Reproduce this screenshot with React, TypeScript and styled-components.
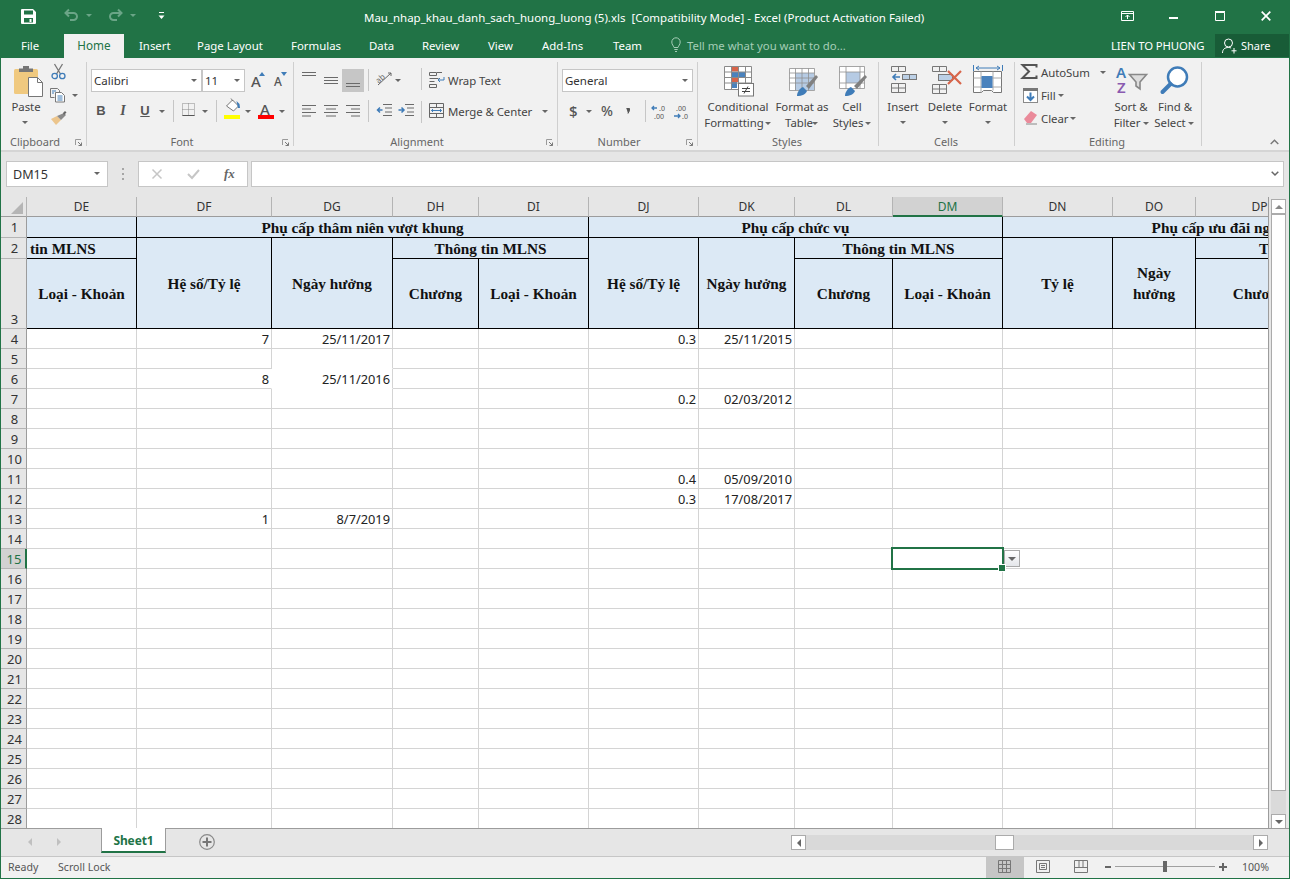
import React from "react";
import styled, { createGlobalStyle, css } from "styled-components";

const UI = `"Noto Sans", "Open Sans", sans-serif`;
const GREEN = "#217346";
const ICON = "#6a6a6a";
const BLUE = "#3f7cb8";

const Global = createGlobalStyle`
  html, body { margin: 0; padding: 0; width: 1290px; height: 879px; overflow: hidden; background: #e6e6e6; }
  #root { width: 1290px; height: 879px; }
  * { box-sizing: border-box; }
`;

const Win = styled.div`
  position: relative; width: 1290px; height: 879px; overflow: hidden;
  background: #e6e6e6; font-family: ${UI}; border: 1px solid ${GREEN}; border-top: 0;
`;
const Layer = styled.div`position: absolute; left: -1px; top: 0; width: 1290px; height: 879px;`;

/* ---------- title bar ---------- */
const TitleBar = styled.div`position: absolute; left: 0; top: 0; width: 1290px; height: 58px; background: ${GREEN};`;
const TitleText = styled.div`
  position: absolute; left: 364px; top: 9px; width: 570px; height: 18px; line-height: 18px;
  font-size: 11.48px; color: #fff; white-space: pre;
`;
const Tab = styled.div<{ $x: number; $active?: boolean }>`
  position: absolute; left: ${p => p.$x}px; top: 37px; height: 18px; line-height: 17px;
  font-size: 11.4px; color: #fff; white-space: nowrap;
`;
const HomeTab = styled.div`
  position: absolute; left: 64px; top: 34px; width: 60px; height: 24px; background: #f1f1f1;
  color: ${GREEN}; font-size: 11.7px; text-align: center; line-height: 23px;
`;
const TellMe = styled.div`
  position: absolute; left: 687px; top: 37px; height: 18px; line-height: 17px; font-size: 11.35px; color: #a5cdb6; white-space: nowrap;
`;
const UserName = styled.div`
  position: absolute; left: 1111px; top: 37px; height: 18px; line-height: 17px; font-size: 11.35px; color: #fff; white-space: nowrap; letter-spacing: -0.1px;
`;
const ShareBox = styled.div`
  position: absolute; left: 1215px; top: 34px; width: 74px; height: 23px; background: #185c37;
  color: #fff; font-size: 11px; line-height: 23px; padding-left: 26px;
`;

/* ---------- generic drawing holder ---------- */
const IconBox = styled.svg<{ $x: number; $y: number }>`
  position: absolute; left: ${p => p.$x}px; top: ${p => p.$y}px; display: block; overflow: visible;
`;
const Ico: React.FC<{ x: number; y: number; w: number; h: number; children: React.ReactNode }> = ({ x, y, w, h, children }) => (
  <IconBox $x={x} $y={y} width={w} height={h} viewBox={`0 0 ${w} ${h}`} fill="none">{children}</IconBox>
);

/* ---------- ribbon ---------- */
const Ribbon = styled.div`position: absolute; left: 0; top: 58px; width: 1290px; height: 92px; background: #f1f1f1; border-left: 1px solid ${GREEN}; border-right: 1px solid ${GREEN};`;
const RibbonEdge = styled.div`position: absolute; left: 1px; top: 150px; width: 1288px; height: 2px; background: #d5d5d5;`;
const Items = styled.div`position: absolute; left: 0; top: 0; width: 1290px; height: 152px;`;
const GroupDivider = styled.div<{ $x: number }>`
  position: absolute; left: ${p => p.$x}px; top: 62px; width: 1px; height: 84px; background: #cfcfcf;
`;
const MiniDivider = styled.div<{ $x: number; $y: number }>`
  position: absolute; left: ${p => p.$x}px; top: ${p => p.$y}px; width: 1px; height: 22px; background: #c6c6c6;
`;
const GroupLabel = styled.div<{ $cx: number }>`
  position: absolute; left: ${p => p.$cx}px; top: 134px; transform: translateX(-50%);
  height: 16px; line-height: 16px; font-size: 11px; color: #666; white-space: nowrap;
`;
const Label = styled.div<{ $x: number; $y: number; $center?: boolean }>`
  position: absolute; left: ${p => p.$x}px; top: ${p => p.$y - 8}px; height: 16px; line-height: 16px;
  font-size: 11.4px; color: #444; white-space: nowrap; letter-spacing: -0.05px;
  ${p => p.$center && css`transform: translateX(-50%);`}
`;
const Caret = styled.i<{ $x: number; $y: number; $tint?: string }>`
  position: absolute; left: ${p => p.$x - 3}px; top: ${p => p.$y - 1}px; width: 0; height: 0;
  border-left: 3px solid transparent; border-right: 3px solid transparent; border-top: 3px solid ${p => p.$tint ?? "#666"};
`;
const ComboBox = styled.div<{ $x: number; $w: number }>`
  position: absolute; left: ${p => p.$x}px; top: 69px; width: ${p => p.$w}px; height: 23px; background: #fff;
  border: 1px solid #c6c6c6; font-size: 11.5px; line-height: 21px; padding-left: 2px; color: #333;
`;
const PressedCell = styled.div`position: absolute; left: 342px; top: 69px; width: 22px; height: 23px; background: #c6c6c6;`;
const FontButton = styled.div<{ $x: number; $italic?: boolean; $under?: boolean }>`
  position: absolute; left: ${p => p.$x}px; top: 102px; width: 14px; height: 18px; line-height: 18px; text-align: center;
  font-family: "Liberation Sans", sans-serif; font-size: 13px; font-weight: 700; color: #555;
  ${p => p.$italic && css`font-family: "Liberation Serif", serif; font-style: italic; font-size: 14px;`}
  ${p => p.$under && css`text-decoration: underline;`}
`;
const BigLetter = styled.div<{ $x: number; $y: number; $s: number }>`
  position: absolute; left: ${p => p.$x}px; top: ${p => p.$y}px; font-family: ${UI}; font-size: ${p => p.$s}px; line-height: 16px; color: #555; font-weight: 500;
`;
const Swatch = styled.div<{ $x: number; $c: string }>`
  position: absolute; left: ${p => p.$x}px; top: 115px; width: 16px; height: 4px; background: ${p => p.$c};
`;
const Launcher: React.FC<{ x: number }> = ({ x }) => (
  <Ico x={x} y={139} w={7} h={7}>
    <path d="M0.5 6V0.5H6" stroke="#9a9a9a" />
    <path d="M3 3L6.5 6.5M6.5 3.5V6.5H3.5" stroke="#7a7a7a" />
  </Ico>
);

/* ---------- formula bar ---------- */
const FormulaBox = styled.div<{ $x: number; $w: number }>`
  position: absolute; left: ${p => p.$x}px; top: 161px; width: ${p => p.$w}px; height: 26px; background: #fff; border: 1px solid #c6c6c6;
`;
const NameText = styled.div`
  position: absolute; left: 13px; top: 166px; height: 18px; line-height: 18px; font-size: 12.6px; color: #333;
`;
const FxText = styled.div`
  position: absolute; left: 224px; top: 165px; height: 18px; line-height: 18px; font-family: "Liberation Serif", serif; font-style: italic; font-size: 13px; font-weight: 700; color: #666;
`;

/* ---------- sheet ---------- */
const COLS = ["DE", "DF", "DG", "DH", "DI", "DJ", "DK", "DL", "DM", "DN", "DO", "DP", "DQ"];
const WIDTHS = [110, 135, 121, 86, 110, 110, 96, 98, 110, 110, 83, 128, 111];

const Sheet = styled.div`
  position: absolute; left: 1px; top: 197px; width: 1268px; height: 632px; overflow: hidden;
  border-right: 1px solid #9c9c9c; background: #fff;
  display: grid;
  grid-template-columns: 26px ${WIDTHS.map(w => w + "px").join(" ")};
  grid-template-rows: 20px 21px 21px 70px repeat(25, 20px);
`;
const Corner = styled.div`
  background: #e6e6e6; border-right: 1px solid #b4b4b4; border-bottom: 1px solid #9c9c9c; position: relative;
  &::after { content: ""; position: absolute; right: 3px; bottom: 2px; width: 0; height: 0;
    border-left: 12px solid transparent; border-bottom: 12px solid #b5b5b5; }
`;
const ColHead = styled.div<{ $on?: boolean }>`
  background: ${p => p.$on ? "#d2d2d2" : "#e6e6e6"}; border-right: 1px solid #b4b4b4;
  border-bottom: ${p => p.$on ? `2px solid ${GREEN}` : "1px solid #9c9c9c"};
  color: ${p => p.$on ? GREEN : "#333"}; font-size: 12px; line-height: 20px; text-align: center; white-space: nowrap;
`;
const RowHead = styled.div<{ $on?: boolean; $low?: boolean }>`
  background: ${p => p.$on ? "#d2d2d2" : "#e6e6e6"}; border-bottom: 1px solid #b4b4b4;
  border-right: ${p => p.$on ? `2px solid ${GREEN}` : "1px solid #9c9c9c"};
  color: ${p => p.$on ? GREEN : "#333"}; font-size: 13px; line-height: 18px; text-align: center;
  display: flex; align-items: ${p => p.$low ? "flex-end" : "center"}; justify-content: center;
  padding-left: 2px;
`;
const Band = styled.div<{ $col: number; $span?: number; $row: number; $rows?: number; $left?: boolean }>`
  grid-column: ${p => p.$col + 2} / span ${p => p.$span ?? 1};
  grid-row: ${p => p.$row + 1} / span ${p => p.$rows ?? 1};
  background: #dce9f5; border-right: 1px solid #000; border-bottom: 1px solid #000;
  font-family: "Liberation Serif", "Times New Roman", serif; font-weight: 700; font-size: 15.27px; line-height: 21px; color: #111;
  display: flex; align-items: center; justify-content: ${p => p.$left ? "flex-start" : "center"};
  text-align: center; white-space: pre-line; overflow: hidden;
  padding-top: ${p => p.$row === 1 ? "1px" : "0"};
  padding-left: ${p => p.$left ? "3px" : "0"};
`;
const Cell = styled.div<{ $noR?: boolean; $noB?: boolean }>`
  position: relative;
  border-right: ${p => p.$noR ? "1px solid transparent" : "1px solid #d4d4d4"};
  border-bottom: ${p => p.$noB ? "1px solid transparent" : "1px solid #d4d4d4"};
  font-size: 12.8px; line-height: 20px; text-align: right; padding-right: 2px; color: #222; white-space: nowrap;
`;
const Selection = styled.div`
  position: absolute; left: -2px; top: -2px; width: 113px; height: 23px; border: 2px solid ${GREEN}; z-index: 3;
  &::after { content: ""; position: absolute; right: -4px; bottom: -4px; width: 6px; height: 6px; background: ${GREEN}; border: 1px solid #fff; }
`;
const ValidationButton = styled.div`
  position: absolute; left: 111px; top: 1px; width: 16px; height: 17px; z-index: 2; border: 1px solid #a9a9a9;
  background: linear-gradient(#fff, #e4e6ea);
  &::after { content: ""; position: absolute; left: 3px; top: 6px; border-left: 4px solid transparent; border-right: 4px solid transparent; border-top: 4px solid #666; }
`;

/* ---------- scroll bars, tabs, status ---------- */
const VTrack = styled.div`position: absolute; left: 1271px; top: 199px; width: 15px; height: 630px; background: #dadada;`;
const ScrollButton = styled.div<{ $x: number; $y: number; $w?: number; $h?: number }>`
  position: absolute; left: ${p => p.$x}px; top: ${p => p.$y}px; width: ${p => p.$w ?? 15}px; height: ${p => p.$h ?? 15}px;
  background: #fff; border: 1px solid #ababab; display: flex; align-items: center; justify-content: center;
`;
const ArrowUp = styled.i<{ $down?: boolean }>`
  display: block; width: 0; height: 0; border-left: 4px solid transparent; border-right: 4px solid transparent;
  ${p => p.$down ? css`border-top: 4px solid #666;` : css`border-bottom: 4px solid #888;`}
`;
const ArrowSide = styled.i<{ $left?: boolean; $c?: string }>`
  display: block; width: 0; height: 0; border-top: 4px solid transparent; border-bottom: 4px solid transparent;
  ${p => p.$left ? css`border-right: 4px solid ${p.$c ?? "#666"};` : css`border-left: 4px solid ${p.$c ?? "#666"};`}
`;
const VThumb = styled.div`position: absolute; left: 1271px; top: 214px; width: 15px; height: 577px; background: #fff; border: 1px solid #ababab;`;
const TabStrip = styled.div`position: absolute; left: 1px; top: 828px; width: 1288px; height: 28px; background: #e6e6e6; border-top: 1px solid #9c9c9c;`;
const SheetTab = styled.div`
  position: absolute; left: 101px; top: 828px; width: 65px; height: 25px; background: #fff;
  border-left: 1px solid #9c9c9c; border-right: 1px solid #9c9c9c; border-bottom: 2px solid ${GREEN};
  color: ${GREEN}; font-size: 12px; font-weight: 700; text-align: center; line-height: 26px; letter-spacing: -0.1px;
`;
const NavArrow = styled.div<{ $x: number }>`position: absolute; left: ${p => p.$x}px; top: 838px;`;
const HTrack = styled.div`position: absolute; left: 791px; top: 835px; width: 477px; height: 15px; background: #d9d9d9;`;
const StatusBar = styled.div`
  position: absolute; left: 1px; top: 856px; width: 1288px; height: 22px; background: #f1f1f1; border-top: 1px solid #c6c6c6;
`;
const StatusText = styled.div<{ $x: number }>`
  position: absolute; left: ${p => p.$x}px; top: 859px; height: 16px; line-height: 16px; font-size: 10.6px; color: #555; white-space: nowrap;
`;
const ViewActive = styled.div`position: absolute; left: 986px; top: 857px; width: 38px; height: 21px; background: #c6c6c6;`;
const ZoomRail = styled.div`position: absolute; left: 1115px; top: 866px; width: 100px; height: 1px; background: #a0a0a0;`;
const ZoomKnob = styled.div`position: absolute; left: 1163px; top: 861px; width: 4px; height: 11px; background: #666;`;
const ZoomSign = styled.div<{ $x: number; $w: number }>`position: absolute; left: ${p => p.$x}px; top: 866px; width: ${p => p.$w}px; height: 2px; background: #666;`;
const ZoomPlusBar = styled.div`position: absolute; left: 1222px; top: 863px; width: 2px; height: 8px; background: #666;`;

/* ---------- icons ---------- */
const HLines: React.FC<{ x: number; y: number; rows: [number, number][]; gap: number; c?: string }> = ({ x, y, rows, gap, c = ICON }) => (
  <Ico x={x} y={y} w={16} h={rows.length * gap + 1}>
    {rows.map(([a, b], i) => <line key={i} x1={a} x2={b} y1={i * gap + 0.5} y2={i * gap + 0.5} stroke={c} />)}
  </Ico>
);

const values: Record<string, string> = {
  DF4: "7", DG4: "25/11/2017", DJ4: "0.3", DK4: "25/11/2015",
  DF6: "8", DG6: "25/11/2016",
  DJ7: "0.2", DK7: "02/03/2012",
  DJ11: "0.4", DK11: "05/09/2010",
  DJ12: "0.3", DK12: "17/08/2017",
  DF13: "1", DG13: "8/7/2019",
};
const rowNumbers = Array.from({ length: 25 }, (_, i) => i + 4);

export default function App() {
  return (
    <Win>
      <Global />
      <Layer>
        <TitleBar />
        {/* quick access */}
        <Ico x={21} y={9} w={15} h={15}>
          <path fillRule="evenodd" d="M0 1a1 1 0 0 1 1-1h11l3 3v11a1 1 0 0 1-1 1H1a1 1 0 0 1-1-1zM3 1.500v4h9v-4zM3 9v4.500h9V9z" fill="#fff" />
          <rect x="8.500" y="10" width="2" height="3" fill="#fff" />
        </Ico>
        <Ico x={64} y={8} w={15} h={14}>
          <path d="M5 1.500L1.500 5L5 8.500M1.500 5H9.500a3.500 3.500 0 0 1 0 7H6" stroke="#6ba587" strokeWidth="2" />
        </Ico>
        <Caret $x={89} $y={15} $tint="#6ba587" />
        <Ico x={108} y={8} w={15} h={14}>
          <path d="M10 1.500L13.500 5L10 8.500M13.500 5H5.500a3.500 3.500 0 0 0 0 7H9" stroke="#6ba587" strokeWidth="2" />
        </Ico>
        <Caret $x={133} $y={15} $tint="#6ba587" />
        <Ico x={158} y={12} w={7} h={8}>
          <path d="M1 .5h5" stroke="#fff" /><path d="M.5 3.500h6L3.500 7z" fill="#fff" />
        </Ico>
        <TitleText>{"Mau_nhap_khau_danh_sach_huong_luong (5).xls  [Compatibility Mode] - Excel (Product Activation Failed)"}</TitleText>
        {/* window controls */}
        <Ico x={1121} y={11} w={13} h={10}>
          <path d="M.5.5h12v9H.5zM.5 2.500h12" stroke="#fff" /><path d="M6.500 8V4M4.500 6l2-2 2 2" stroke="#fff" />
        </Ico>
        <Ico x={1169} y={17} w={9} h={2}><rect width="9" height="2" fill="#fff" /></Ico>
        <Ico x={1215} y={11} w={10} h={10}><path d="M.5 1.500h9v8h-9z" stroke="#fff" /><path d="M0 .8h10" stroke="#fff" strokeWidth="1.600" /></Ico>
        <Ico x={1261} y={11} w={10} h={10}><path d="M.7.7l8.600 8.600M9.300.7L.7 9.300" stroke="#fff" strokeWidth="1.700" /></Ico>
        {/* tabs */}
        <Tab $x={21}>File</Tab>
        <HomeTab>Home</HomeTab>
        <Tab $x={139}>Insert</Tab>
        <Tab $x={197}>Page Layout</Tab>
        <Tab $x={291}>Formulas</Tab>
        <Tab $x={369}>Data</Tab>
        <Tab $x={422}>Review</Tab>
        <Tab $x={488}>View</Tab>
        <Tab $x={542}>Add-Ins</Tab>
        <Tab $x={613}>Team</Tab>
        <Ico x={671} y={37} w={10} h={16}>
          <path d="M3 10.500C2.500 8.500.8 7.800.8 5A4.200 4.200 0 0 1 9.200 5c0 2.800-1.700 3.500-2.200 5.500zM3.300 12.500h3.400M4 14.500h2" stroke="#a5cdb6" />
        </Ico>
        <TellMe>Tell me what you want to do...</TellMe>
        <UserName>LIEN TO PHUONG</UserName>
        <ShareBox>Share</ShareBox>
        <Ico x={1222} y={38} w={16} h={16}>
          <circle cx="6.500" cy="5" r="4" stroke="#fff" /><path d="M.5 15c0-3.500 2-5.500 6-5.500 1 0 2 .2 2.600.5M12 10v5.500M9.500 12.800h5" stroke="#fff" />
        </Ico>

        <Ribbon />
        <RibbonEdge />
        <Items>
          {[86, 293, 557, 697, 878, 1014, 1201].map(x => <GroupDivider key={x} $x={x} />)}

          {/* Clipboard */}
          <Ico x={13} y={65} w={30} h={32}>
            <rect x="1" y="4" width="24" height="25" rx="1.500" fill="#f0c97f" />
            <path d="M6 4V3.500h4V1h6v2.500h4V7H6z" fill="#767676" />
            <path d="M15.500 12.500h9l5 5v14h-14z" fill="#fff" stroke="#767676" />
            <path d="M24.500 12.500v5h5" stroke="#767676" />
          </Ico>
          <Ico x={51} y={63} w={15} h={17}>
            <path d="M3.500 1l6 10M11.500 1l-6 10" stroke="#777" strokeWidth="1.300" />
            <circle cx="3.700" cy="13" r="2.700" stroke={BLUE} strokeWidth="1.300" />
            <circle cx="11.300" cy="13" r="2.700" stroke={BLUE} strokeWidth="1.300" />
          </Ico>
          <Ico x={50} y={88} w={16} h={15}>
            <path d="M.5.5h7l2 2v2M.5.5v9h4" stroke="#777" />
            <path d="M5.500 4.500h6l3 3v6.500h-9z" fill="#fff" stroke="#777" />
            <path d="M7.500 8h5M7.500 10h5M7.500 12h5M2 3h4M2 5h2" stroke={BLUE} />
          </Ico>
          <Caret $x={75} $y={95} />
          <Ico x={50} y={110} w={17} h={16}>
            <path d="M1 9l5 6 5-5-4-4z" fill="#ecc58c" />
            <path d="M7 6l4 4 5-5-2-2z" fill="#8a8a8a" />
            <path d="M13 3l2-2 1.500 1.500L14 5z" fill="#666" />
          </Ico>
          <Label $x={26} $y={107} $center>Paste</Label>
          <Caret $x={25} $y={122} />
          <GroupLabel $cx={35}>Clipboard</GroupLabel>
          <Launcher x={75} />

          {/* Font */}
          <ComboBox $x={91} $w={111}>Calibri</ComboBox>
          <Caret $x={194} $y={80} />
          <ComboBox $x={202} $w={43}>11</ComboBox>
          <Caret $x={237} $y={80} />
          <BigLetter $x={251} $y={73} $s={15}>A</BigLetter>
          <Ico x={259} y={72} w={6} h={4}><path d="M0 4l3-4 3 4z" fill={BLUE} /></Ico>
          <BigLetter $x={274} $y={74} $s={12}>A</BigLetter>
          <Ico x={281} y={72} w={6} h={4}><path d="M0 0l3 4 3-4z" fill={BLUE} /></Ico>
          <FontButton $x={94}>B</FontButton>
          <FontButton $x={116} $italic>I</FontButton>
          <FontButton $x={138} $under>U</FontButton>
          <Caret $x={162} $y={111} />
          <MiniDivider $x={173} $y={100} />
          <Ico x={182} y={103} w={13} h={13}>
            <path d="M.5.5h12v12H.5zM.5 6.500h12M6.500.5v12" stroke="#888" strokeDasharray="1 1" />
            <path d="M.5 12.500h12" stroke="#555" />
          </Ico>
          <Caret $x={205} $y={111} />
          <MiniDivider $x={216} $y={100} />
          <Ico x={225} y={97} w={16} h={17}>
            <path d="M1.500 9L7.500 3l6 6-5 5z" fill="#fff" stroke="#777" />
            <path d="M6 1.500L8 4" stroke="#777" />
            <path d="M11.500 4l3 3 .5 4h-2z" fill={BLUE} />
          </Ico>
          <Swatch $x={224} $c="#ffff00" />
          <Caret $x={248} $y={111} />
          <BigLetter $x={260} $y={101} $s={15}>A</BigLetter>
          <Swatch $x={258} $c="#ff0000" />
          <Caret $x={282} $y={111} />
          <GroupLabel $cx={182}>Font</GroupLabel>
          <Launcher x={282} />

          {/* Alignment */}
          <PressedCell />
          <HLines x={302} y={72} rows={[[0, 14], [0, 14]]} gap={3} />
          <HLines x={324} y={77} rows={[[0, 14], [0, 14], [0, 14]]} gap={3} />
          <HLines x={346} y={83} rows={[[0, 14], [0, 14]]} gap={3} />
          <MiniDivider $x={368} $y={69} />
          <Ico x={376} y={71} w={17} h={17}>
            <path d="M2 14L15 2M12 2h3v3" stroke="#666" />
            <text x="0" y="10" fontSize="8" fill="#666" transform="rotate(-42 5 8)" fontFamily="Noto Sans">ab</text>
          </Ico>
          <Caret $x={398} $y={80} />
          <HLines x={302} y={105} rows={[[0, 14], [0, 9], [0, 14], [0, 9]]} gap={3.5} />
          <HLines x={324} y={105} rows={[[0, 14], [2, 12], [0, 14], [2, 12]]} gap={3.5} />
          <HLines x={346} y={105} rows={[[0, 14], [5, 14], [0, 14], [5, 14]]} gap={3.5} />
          <MiniDivider $x={368} $y={100} />
          <Ico x={376} y={104} w={16} h={13}>
            <path d="M7 .5h9M9 4h7M9 8h7M7 11.500h9" stroke={ICON} />
            <path d="M6.500 6H1.500M4 3.500L1.500 6 4 8.500" stroke={BLUE} strokeWidth="1.500" />
          </Ico>
          <Ico x={398} y={104} w={16} h={13}>
            <path d="M7 .5h9M9 4h7M9 8h7M7 11.500h9" stroke={ICON} />
            <path d="M.5 6h5M3.500 3.500L6 6 3.500 8.500" stroke={BLUE} strokeWidth="1.500" />
          </Ico>
          <MiniDivider $x={421} $y={68} />
          <MiniDivider $x={421} $y={101} />
          <Ico x={429} y={72} w={16} h={16}>
            <path d="M.5.5h7v3h-7zM.5 6.500h9M.5 9.500h5M.5 12.500v3h7v-3z" stroke="#666" />
            <path d="M8 .5h5" stroke="#666" />
            <path d="M15 5v3h-6M11 6L9 8l2 2" stroke={BLUE} />
          </Ico>
          <Label $x={448} $y={81}>Wrap Text</Label>
          <Ico x={429} y={103} w={15} h={15}>
            <path d="M.5.5h14v14H.5zM.5 4.500h14M.5 10.500h14" stroke="#666" />
            <path d="M7.500.5v4M7.500 10.500v4" stroke="#666" />
            <path d="M2.500 7.500h10M4 6L2.500 7.500 4 9M11 6l1.500 1.500L11 9" stroke={BLUE} />
          </Ico>
          <Label $x={448} $y={112}>Merge &amp; Center</Label>
          <Caret $x={545} $y={111} />
          <GroupLabel $cx={417}>Alignment</GroupLabel>
          <Launcher x={546} />

          {/* Number */}
          <ComboBox $x={562} $w={131}>General</ComboBox>
          <Caret $x={685} $y={80} />
          <BigLetter $x={569} $y={103} $s={15}>$</BigLetter>
          <Caret $x={589} $y={111} />
          <BigLetter $x={601} $y={103} $s={14}>%</BigLetter>
          <Ico x={626} y={107} w={5} h={7}><path d="M.5 1.500h3v2l-1.500 3" fill="#555" stroke="#555" /></Ico>
          <MiniDivider $x={645} $y={100} />
          <Ico x={651} y={104} w={18} h={15}>
            <path d="M6 4H1M3 2L1 4l2 2" stroke={BLUE} strokeWidth="1.300" />
            <text x="8" y="6.500" fontSize="7" fill="#555" fontFamily="Noto Sans">.0</text>
            <text x="3" y="14.500" fontSize="7" fill="#555" fontFamily="Noto Sans">.00</text>
          </Ico>
          <Ico x={673} y={104} w={18} h={15}>
            <text x="3" y="6.500" fontSize="7" fill="#555" fontFamily="Noto Sans">.00</text>
            <path d="M1 12h6M5 10l2 2-2 2" stroke={BLUE} strokeWidth="1.300" />
            <text x="9" y="14.500" fontSize="7" fill="#555" fontFamily="Noto Sans">.0</text>
          </Ico>
          <GroupLabel $cx={619}>Number</GroupLabel>
          <Launcher x={686} />

          {/* Styles */}
          <Ico x={724} y={66} w={31} h={31}>
            <path d="M.5.5h27v23H.5z" fill="#fff" />
            <path d="M8 1h6v4.500H8zM8 11h7v5H8z" fill="#d8654a" />
            <path d="M8 6h14v5H8zM8 16h5v6H8z" fill="#4a82bd" />
            <path d="M.5.5h27v23H.5zM.5 6h27M.5 11.500h27M.5 17h27M7.500.5v23M14.500.5v23M21.500.5v23" stroke="#8a8a8a" />
            <rect x="14.500" y="17.500" width="15" height="12.500" fill="#fff" stroke="#777" />
            <path d="M18 22.500h8M18 25.500h8M24 20.500l-4 7" stroke="#444" />
          </Ico>
          <Label $x={738} $y={107} $center>Conditional</Label>
          <Label $x={734} $y={123} $center>Formatting</Label>
          <Caret $x={768} $y={123} />
          <Ico x={789} y={68} w={30} h={29}>
            <path d="M.5.5h25v22H.5z" fill="#fff" />
            <path d="M6 5h19v17H6z" fill="#b6cbe4" />
            <path d="M.5.5h25v22H.5zM.5 5h25M.5 10h25M.5 15h25M6.500.5v22M13 .5v22M19.500.5v22" stroke="#8f8f8f" strokeWidth=".8" />
            <path d="M8 28c0-4 3-8 6-9l4 4c-1 3-5 5-10 5z" fill={BLUE} />
            <path d="M17 18L27 7l2 2-9 12z" fill="#808080" />
          </Ico>
          <Label $x={802} $y={107} $center>Format as</Label>
          <Label $x={799} $y={123} $center>Table</Label>
          <Caret $x={815} $y={123} />
          <Ico x={839} y={66} w={30} h={31}>
            <path d="M.5.5h25v22H.5z" fill="#fff" />
            <path d="M7 6h14v11H7z" fill="#b6cbe4" />
            <path d="M.5.5h25v22H.5zM.5 6h25M.5 17h25M7 .5v22M21 .5v22" stroke="#8f8f8f" strokeWidth=".8" />
            <path d="M6 30c0-4 3-8 6-9l4 4c-1 3-5 5-10 5z" fill={BLUE} />
            <path d="M15 20L26 9l2 2-10 12z" fill="#808080" />
          </Ico>
          <Label $x={852} $y={107} $center>Cell</Label>
          <Label $x={848} $y={123} $center>Styles</Label>
          <Caret $x={868} $y={123} />
          <GroupLabel $cx={787}>Styles</GroupLabel>

          {/* Cells */}
          <Ico x={891} y={66} w={26} h={27}>
            <path d="M.5.5h14v5H.5zM7.500.5v5M.5 17.500h14v9H.5zM.5 22h14M7.500 17.500v9" stroke="#777" />
            <rect x="11.500" y="8.500" width="14" height="5" fill="#bcd0e6" stroke="#777" />
            <path d="M18.500 8.500v5" stroke="#777" />
            <path d="M9 11H2M5 8l-3 3 3 3" stroke={BLUE} strokeWidth="1.600" />
          </Ico>
          <Label $x={903} $y={107} $center>Insert</Label>
          <Caret $x={903} $y={122} />
          <Ico x={932} y={66} w={31} h={28}>
            <path d="M.5.5h14v5H.5zM7.500.5v5M.5 18.500h14v9H.5zM.5 23h14M7.500 18.500v9" stroke="#777" />
            <rect x="6.500" y="8.500" width="14" height="6" fill="#bcd0e6" stroke="#777" />
            <path d="M16 5l13 13M29 5L16 18" stroke="#d8654a" strokeWidth="2.200" />
          </Ico>
          <Label $x={945} $y={107} $center>Delete</Label>
          <Caret $x={945} $y={122} />
          <Ico x={973} y={64} w={30} h={31}>
            <path d="M.5 1v6M29.500 1v6M3 4h24M6 2L3 4l3 2M24 2l3 2-3 2" stroke={BLUE} />
            <path d="M.5 7.500h28v21h-8l-2-2h-8l-2 2h-8z" fill="#fff" stroke="#777" />
            <path d="M.5 14h28M.5 23h28M8 7.500v21M20 7.500v19" stroke="#aaa" />
            <rect x="8.500" y="12" width="11" height="12" fill="#4a82bd" />
          </Ico>
          <Label $x={988} $y={107} $center>Format</Label>
          <Caret $x={988} $y={122} />
          <GroupLabel $cx={946}>Cells</GroupLabel>

          {/* Editing */}
          <Ico x={1021} y={64} w={16} h={15}>
            <path d="M15.500 3.500V1H1.500l6.500 6.500L1.500 14h14v-2.500" stroke="#555" strokeWidth="2" />
          </Ico>
          <Label $x={1041} $y={73}>AutoSum</Label>
          <Caret $x={1103} $y={72} />
          <Ico x={1023} y={88} w={15} h={15}>
            <rect x=".5" y=".5" width="14" height="14" fill="#fff" stroke="#8a8a8a" />
            <rect x="0" y="0" width="15" height="3" fill="#777" />
            <path d="M7.500 4.500v7M4 8.500l3.500 3.500 3.500-3.500" stroke={BLUE} strokeWidth="2" />
          </Ico>
          <Label $x={1041} $y={96}>Fill</Label>
          <Caret $x={1061} $y={95} />
          <Ico x={1023} y={110} w={15} h={15}>
            <path d="M1 9l7-8 6 4-6 8H4z" fill="#ea8a9a" />
            <path d="M3 14h11" stroke="#888" />
          </Ico>
          <Label $x={1041} $y={119}>Clear</Label>
          <Caret $x={1073} $y={118} />
          <Ico x={1116} y={66} w={32} h={28}>
            <text x="0" y="12" fontSize="15" fontWeight="600" fill={BLUE} fontFamily="Noto Sans">A</text>
            <text x="1" y="27" fontSize="15" fontWeight="600" fill="#8a5ab0" fontFamily="Noto Sans">Z</text>
            <path d="M13.500 8.500h17L24 16v7l-4-3v-4z" fill="#ddd" stroke="#888" strokeWidth="1.600" />
          </Ico>
          <Label $x={1131} $y={107} $center>Sort &amp;</Label>
          <Label $x={1127} $y={123} $center>Filter</Label>
          <Caret $x={1146} $y={123} />
          <Ico x={1160} y={66} w={29} h={28}>
            <circle cx="17.500" cy="11" r="9.500" fill="#fff" stroke={BLUE} strokeWidth="2.500" />
            <path d="M10.500 18L2.500 26" stroke={BLUE} strokeWidth="4" strokeLinecap="round" />
          </Ico>
          <Label $x={1175} $y={107} $center>Find &amp;</Label>
          <Label $x={1170} $y={123} $center>Select</Label>
          <Caret $x={1191} $y={123} />
          <GroupLabel $cx={1107}>Editing</GroupLabel>
          <Ico x={1270} y={139} w={9} h={6}><path d="M.7 5L4.500 1.200 8.300 5" stroke="#777" strokeWidth="1.400" /></Ico>
        </Items>

        {/* formula bar */}
        <FormulaBox $x={6} $w={102} />
        <NameText>DM15</NameText>
        <Caret $x={97} $y={173} />
        <Ico x={122} y={168} w={2} h={12}><path d="M1 0v2M1 5v2M1 10v2" stroke="#a6a6a6" strokeWidth="2" /></Ico>
        <FormulaBox $x={138} $w={110} />
        <Ico x={152} y={169} w={10} h={10}><path d="M.5.5l9 9M9.500.5l-9 9" stroke="#c6c6c6" strokeWidth="1.500" /></Ico>
        <Ico x={187} y={169} w={13} h={10}><path d="M1 5l4 4 7-8" stroke="#c6c6c6" strokeWidth="2" /></Ico>
        <FxText>fx</FxText>
        <FormulaBox $x={251} $w={1033} />
        <Ico x={1271} y={171} w={8} h={5}><path d="M.7.7L4 4 7.300.7" stroke="#666" strokeWidth="1.500" /></Ico>

        {/* sheet */}
        <Sheet>
          <Corner />
          {COLS.map(c => <ColHead key={c} $on={c === "DM"}>{c}</ColHead>)}

          <RowHead>1</RowHead>
          <RowHead>2</RowHead>
          <RowHead $low>3</RowHead>
          <Band $col={0} $row={1} />
          <Band $col={1} $span={4} $row={1}>Phụ cấp thâm niên vượt khung</Band>
          <Band $col={5} $span={4} $row={1}>Phụ cấp chức vụ</Band>
          <Band $col={9} $span={4} $row={1}>Phụ cấp ưu đãi nghề</Band>
          <Band $col={0} $row={2} $left>tin MLNS</Band>
          <Band $col={0} $row={3}>Loại - Khoản</Band>
          <Band $col={1} $row={2} $rows={2}>Hệ số/Tỷ lệ</Band>
          <Band $col={2} $row={2} $rows={2}>Ngày hưởng</Band>
          <Band $col={3} $span={2} $row={2}>Thông tin MLNS</Band>
          <Band $col={3} $row={3}>Chương</Band>
          <Band $col={4} $row={3}>Loại - Khoản</Band>
          <Band $col={5} $row={2} $rows={2}>Hệ số/Tỷ lệ</Band>
          <Band $col={6} $row={2} $rows={2}>Ngày hưởng</Band>
          <Band $col={7} $span={2} $row={2}>Thông tin MLNS</Band>
          <Band $col={7} $row={3}>Chương</Band>
          <Band $col={8} $row={3}>Loại - Khoản</Band>
          <Band $col={9} $row={2} $rows={2}>Tỷ lệ</Band>
          <Band $col={10} $row={2} $rows={2}>{"Ngày\nhưởng"}</Band>
          <Band $col={11} $span={2} $row={2}>Thông tin MLNS</Band>
          <Band $col={11} $row={3}>Chương</Band>
          <Band $col={12} $row={3}>Loại - Khoản</Band>

          {rowNumbers.map(r => (
            <React.Fragment key={r}>
              <RowHead $on={r === 15}>{r}</RowHead>
              {COLS.map(c => {
                const id = `${c}${r}`;
                return (
                  <Cell key={id} $noR={id === "DF6"} $noB={id === "DG5" || id === "DG6"}>
                    {values[id]}
                    {id === "DM15" && <><Selection /><ValidationButton /></>}
                  </Cell>
                );
              })}
            </React.Fragment>
          ))}
        </Sheet>

        {/* vertical scroll */}
        <VTrack />
        <ScrollButton $x={1271} $y={199}><ArrowUp /></ScrollButton>
        <VThumb />
        <ScrollButton $x={1271} $y={814}><ArrowUp $down /></ScrollButton>

        {/* tabs + horizontal scroll */}
        <TabStrip />
        <NavArrow $x={28}><ArrowSide $left $c="#c0c0c0" /></NavArrow>
        <NavArrow $x={57}><ArrowSide $c="#c0c0c0" /></NavArrow>
        <SheetTab>Sheet1</SheetTab>
        <Ico x={199} y={834} w={16} h={16}>
          <circle cx="8" cy="8" r="7.300" stroke="#8a8a8a" strokeWidth="1.200" />
          <path d="M8 3.500v9M3.500 8h9" stroke="#777" strokeWidth="2" />
        </Ico>
        <HTrack />
        <ScrollButton $x={791} $y={835}><ArrowSide $left /></ScrollButton>
        <ScrollButton $x={995} $y={835} $w={19} />
        <ScrollButton $x={1253} $y={835}><ArrowSide /></ScrollButton>

        {/* status */}
        <StatusBar />
        <StatusText $x={8}>Ready</StatusText>
        <StatusText $x={58}>Scroll Lock</StatusText>
        <ViewActive />
        <Ico x={998} y={860} w={13} h={13}>
          <path d="M.5.5h12v12H.5zM.5 4.500h12M.5 8.500h12M4.500.5v12M8.500.5v12" stroke="#777" />
        </Ico>
        <Ico x={1036} y={860} w={14} h={13}>
          <path d="M.5.5h13v12H.5z" stroke="#777" /><path d="M3.500 3.500h7v6h-7zM5 5.500h4M5 7.500h4" stroke="#777" />
        </Ico>
        <Ico x={1074} y={860} w={14} h={13}>
          <path d="M.5.5h13v12H.5zM.5 7.500h13M5 .5v7M9 .5v7" stroke="#777" />
        </Ico>
        <ZoomSign $x={1105} $w={6} />
        <ZoomRail />
        <ZoomKnob />
        <ZoomSign $x={1219} $w={8} />
        <ZoomPlusBar />
        <StatusText $x={1242}>100%</StatusText>
      </Layer>
    </Win>
  );
}
